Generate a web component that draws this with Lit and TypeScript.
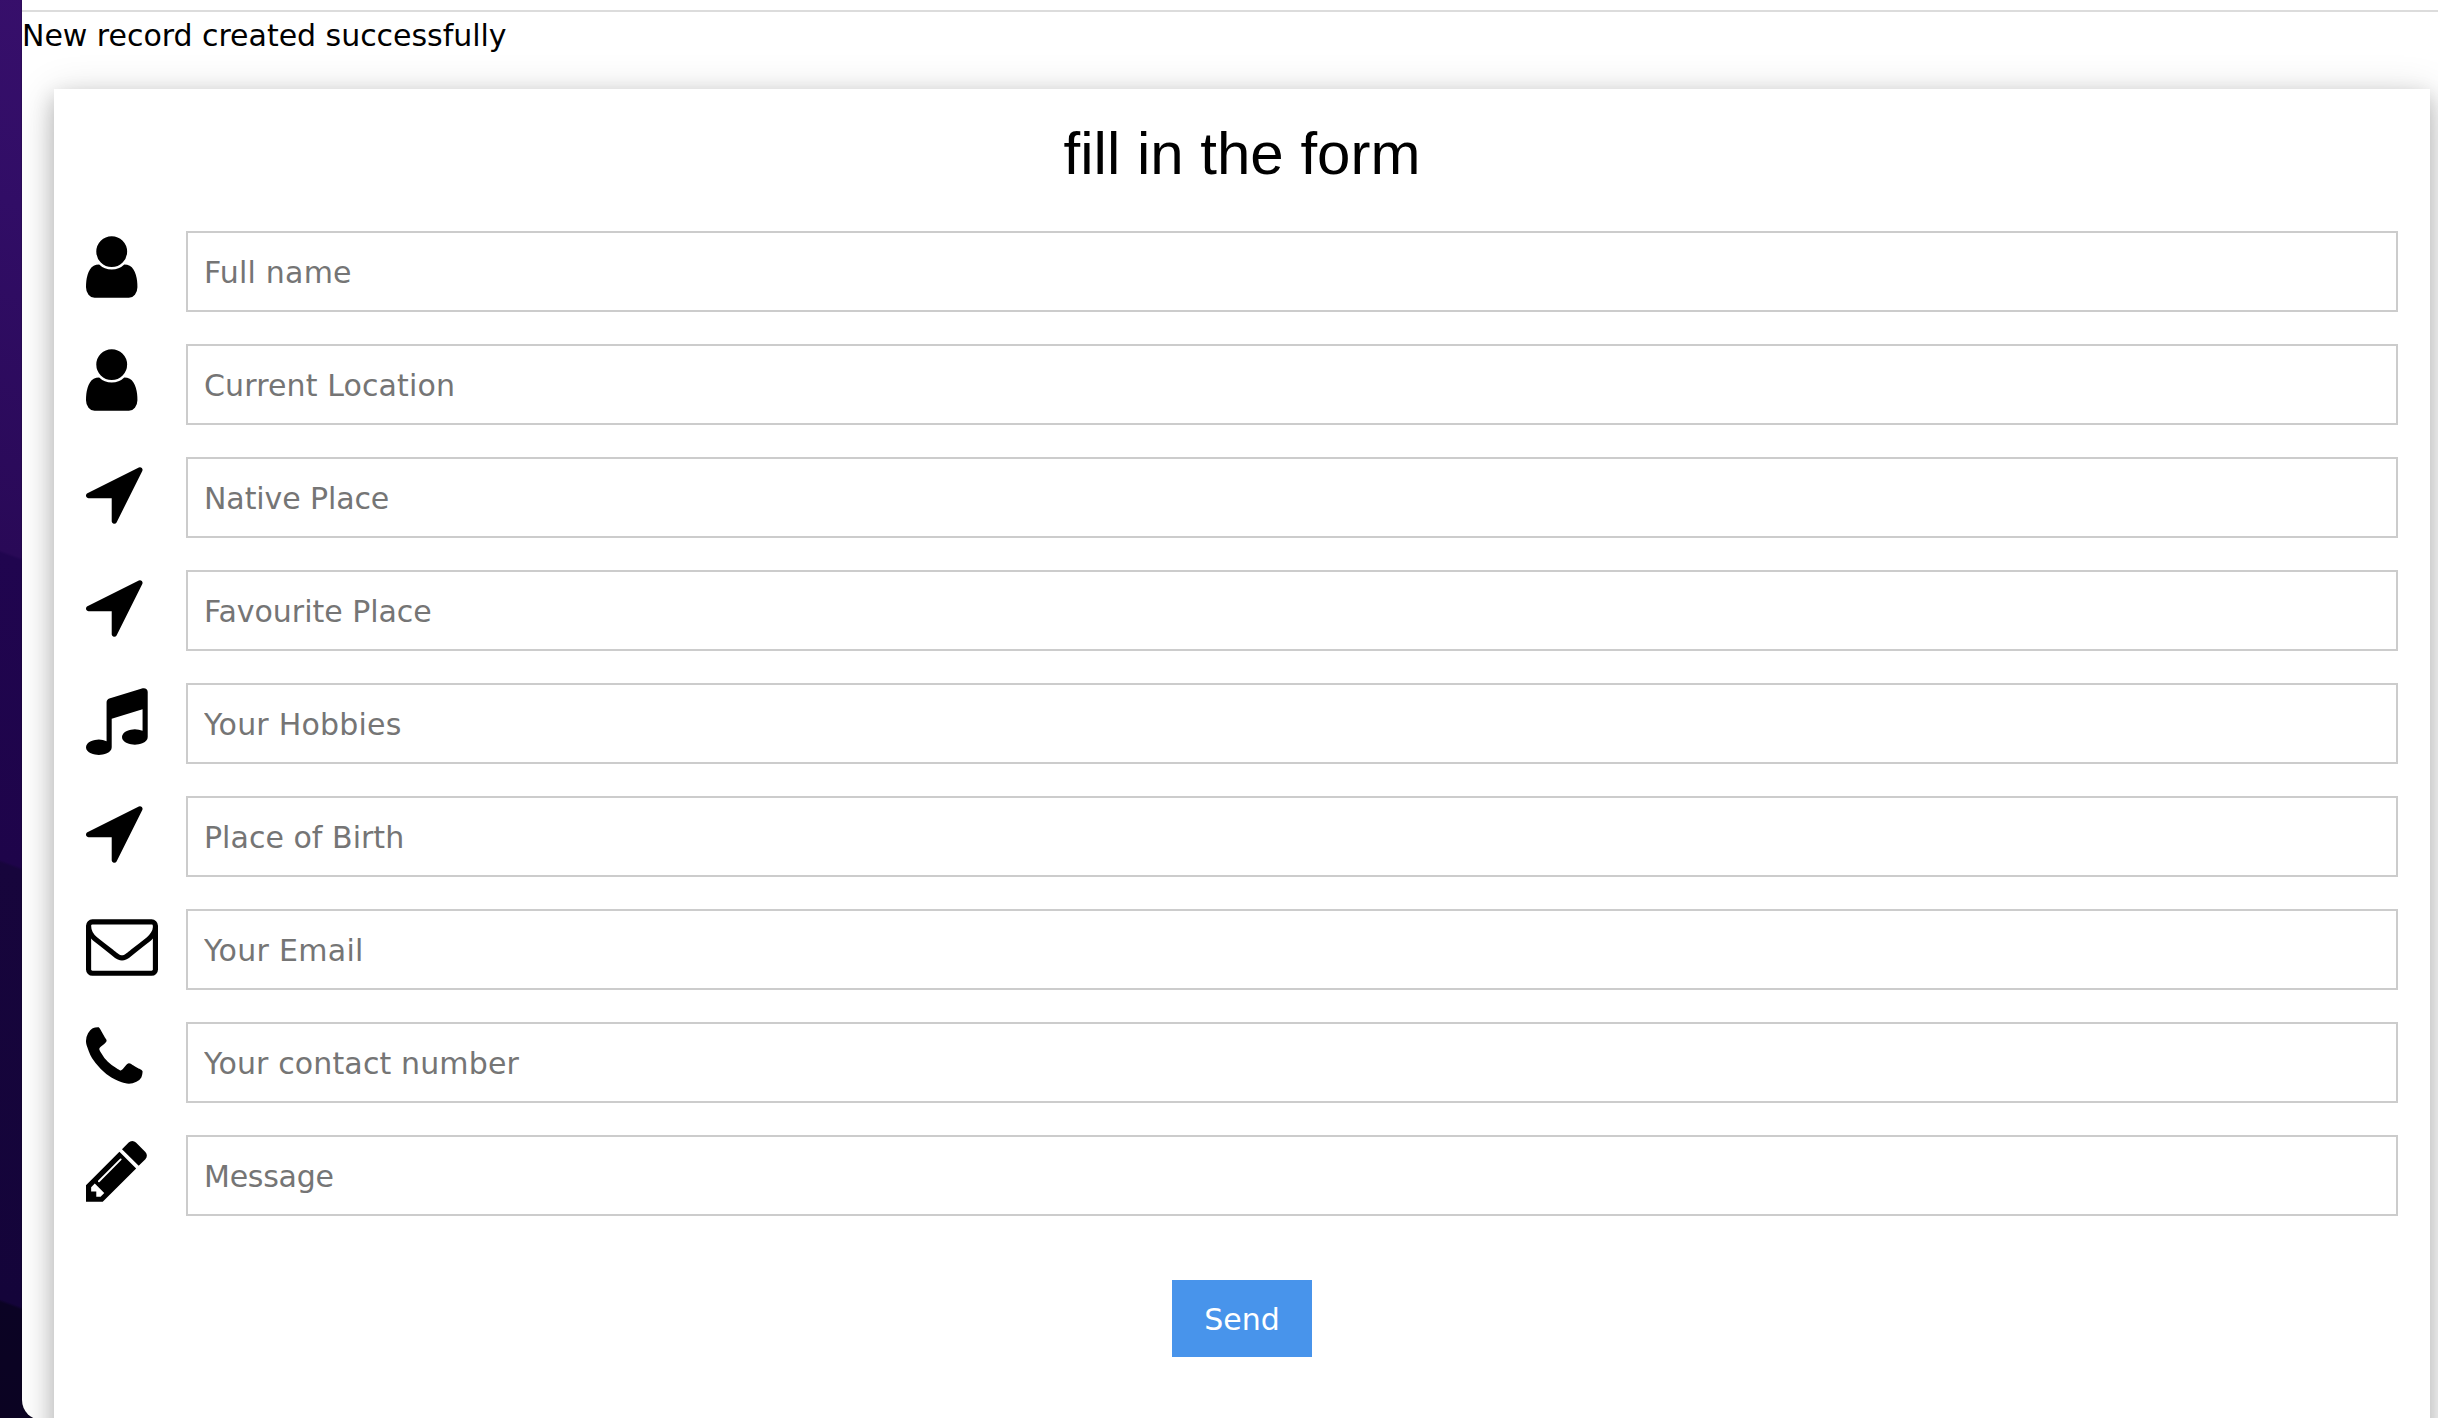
import { LitElement, html, css } from "lit";
import { customElement } from "lit/decorators.js";
import { styleMap } from "lit/directives/style-map.js";

interface Glyph {
  x: number;
  width: number;
  d: string;
}

interface Field {
  icon: string;
  label: string;
  tracking: number;
}

// Glyphs share a 1792-unit em; x and width give the horizontal extent of each one.
const GLYPHS: Record<string, Glyph> = {
  user: {
    x: 256,
    width: 1280,
    d: "M1536 1399q0 109-62.5 187t-150.5 78h-854q-88 0-150.5-78t-62.5-187q0-85 8.5-160.5t31.5-152 58.5-131 94-89 134.5-34.5q131 128 313 128t313-128q76 0 134.5 34.5t94 89 58.5 131 31.5 152 8.5 160.5zm-256-887q0 159-112.5 271.5t-271.5 112.5-271.5-112.5-112.5-271.5 112.5-271.5 271.5-112.5 271.5 112.5 112.5 271.5z",
  },
  arrow: {
    x: 192,
    width: 1408,
    d: "M1593 349l-640 1280q-17 35-57 35-5 0-15-2-22-5-35.5-22.5t-13.5-39.5v-576h-576q-22 0-39.5-13.5t-22.5-35.5 4-42 29-30l1280-640q13-7 29-7 27 0 45 19 15 14 18.5 34.5t-6.5 39.5z",
  },
  music: {
    x: 128,
    width: 1536,
    d: "M1664 224v1120q0 50-34 89t-86 60.5-103.5 32-96.5 10.5-96.5-10.5-103.5-32-86-60.5-34-89 34-89 86-60.5 103.5-32 96.5-10.5q105 0 192 39v-537l-768 237v709q0 50-34 89t-86 60.5-103.5 32-96.5 10.5-96.5-10.5-103.5-32-86-60.5-34-89 34-89 86-60.5 103.5-32 96.5-10.5q105 0 192 39v-967q0-31 19-56.5t49-35.5l832-256q12-4 28-4 40 0 68 28t28 68z",
  },
  envelope: {
    x: 0,
    width: 1792,
    d: "M1664 1504v-768q-32 36-69 66-268 206-426 338-51 43-83 67t-86.5 48.5-102.5 24.5h-2q-48 0-102.5-24.5t-86.5-48.5-83-67q-158-132-426-338-37-30-69-66v768q0 13 9.5 22.5t22.5 9.5h1472q13 0 22.5-9.5t9.5-22.5zm0-1051v-24.5l-.5-13-3-12.5-5.5-9-9-7.5-14-2.5h-1472q-13 0-22.5 9.5t-9.5 22.5q0 168 147 284 193 152 401 317 6 5 35 29.5t46 37.5 44.5 31.5 50.5 27.5 43 9h2q20 0 43-9t50.5-27.5 44.5-31.5 46-37.5 35-29.5q208-165 401-317 54-43 100.5-115.5t46.5-131.5zm128-37v1088q0 66-47 113t-113 47h-1472q-66 0-113-47t-47-113v-1088q0-66 47-113t113-47h1472q66 0 113 47t47 113z",
  },
  phone: {
    x: 192,
    width: 1408,
    d: "M1600 1240q0 27-10 70.5t-21 68.5q-21 50-122 106-94 51-186 51-27 0-52.5-3.5t-57.5-12.5-47.5-14.5-55.5-20.5-49-18q-98-35-175-83-128-79-264.5-215.5t-215.5-264.5q-48-77-83-175-3-9-18-49t-20.5-55.5-14.5-47.5-12.5-57.5-3.5-52.5q0-92 51-186 56-101 106-122 25-11 68.5-21t70.5-10q14 0 21 3 18 6 53 76 11 19 30 54t35 63.5 31 53.5q3 4 17.5 25t21.5 35.5 7 28.5q0 20-28.5 50t-62 55-62 53-28.5 46q0 9 5 22.5t8.5 20.5 14 24 11.5 19q76 137 174 235t235 174q2 1 19 11.5t24 14 20.5 8.5 22.5 5q18 0 46-28.5t53-62 55-62 50-28.5q14 0 28.5 7t35.5 21.5 25 17.5q25 15 53.5 31t63.5 35 54 30q70 35 76 53 3 7 3 21z",
  },
  pencil: {
    x: 128,
    width: 1536,
    d: "M491 1536l91-91-235-235-91 91v107h128v128h107zm523-928q0-22-22-22-10 0-17 7l-542 542q-7 7-7 17 0 22 22 22 10 0 17-7l542-542q7-7 7-17zm-54-192l416 416-832 832h-416v-416zm683 96q0 53-37 90l-166 166-416-416 166-165q36-38 90-38 53 0 91 38l235 234q37 39 37 91z",
  },
};

const FIELDS: Field[] = [
  { icon: "user", label: "Full name", tracking: 0.2 },
  { icon: "user", label: "Current Location", tracking: 0.12 },
  { icon: "arrow", label: "Native Place", tracking: -0.1 },
  { icon: "arrow", label: "Favourite Place", tracking: -0.03 },
  { icon: "music", label: "Your Hobbies", tracking: 0.22 },
  { icon: "arrow", label: "Place of Birth", tracking: 0.03 },
  { icon: "envelope", label: "Your Email", tracking: 0.28 },
  { icon: "phone", label: "Your contact number", tracking: 0.13 },
  { icon: "pencil", label: "Message", tracking: -0.25 },
];

@customElement("app-root")
export class AppRoot extends LitElement {
  static styles = css`
    :host {
      display: block;
      height: 1418px;
      overflow: hidden;
      font-family: Verdana, "DejaVu Sans", sans-serif;
      font-size: 30px;
      line-height: 45px;
      color: #000;
    }
    .screen {
      display: flex;
    }
    .desktop {
      flex: none;
      width: 42px;
      height: 1418px;
      background: linear-gradient(
        200deg,
        #370f6b 0,
        #310d66 200px,
        #290957 531px,
        #20054f 534px,
        #1e044a 822px,
        #17053c 825px,
        #14043a 1235px,
        #0b0324 1238px,
        #0b0322 100%
      );
    }
    .window {
      flex: none;
      box-sizing: border-box;
      width: 2440px;
      height: 1420px;
      margin-left: -20px;
      padding-top: 10px;
      overflow: hidden;
      background: #fff;
      border-bottom-left-radius: 20px;
      box-shadow: 0 0 2px rgba(0, 0, 0, 0.6);
    }
    .rule {
      height: 2px;
      background: #dcdcdc;
    }
    .status {
      box-sizing: border-box;
      height: 45px;
      margin-bottom: 32px;
      padding-top: 1px;
      letter-spacing: -0.03px;
    }
    .card {
      display: flex;
      flex-direction: column;
      box-sizing: border-box;
      width: 2376px;
      height: 1420px;
      margin-left: 32px;
      padding: 20px 32px 0;
      background: #fff;
      box-shadow: 0 8px 20px 0 rgba(0, 0, 0, 0.2), 0 8px 40px 0 rgba(0, 0, 0, 0.19);
    }
    .title {
      height: 90px;
      margin: 0 0 32px;
      font: 400 60px/90px "Liberation Sans", Arial, sans-serif;
      text-align: center;
    }
    .row {
      display: flex;
      height: 81px;
      margin-bottom: 32px;
    }
    .icon {
      flex: 0 0 100px;
    }
    .glyph {
      display: block;
      height: 72px;
      overflow: visible;
    }
    .input {
      flex: 1;
      box-sizing: border-box;
      height: 81px;
      padding: 17px 16px 15px;
      border: 2px solid #ccc;
      border-radius: 0;
      outline: none;
      background: #fff;
      font: inherit;
    }
    .input::placeholder {
      color: #757575;
      opacity: 1;
    }
    .send {
      align-self: center;
      width: 140px;
      height: 77px;
      margin-top: 32px;
      padding: 2px 0 0;
      border: 0;
      background: #4894eb;
      color: #fff;
      font: inherit;
    }
  `;

  private icon(name: string) {
    const g = GLYPHS[name];
    return html`<svg class="glyph" width=${(g.width * 72) / 1792} height="72" viewBox="${g.x} 0 ${g.width} 1792">
      <path d=${g.d}></path>
    </svg>`;
  }

  render() {
    return html`
      <div class="screen">
        <div class="desktop"></div>
        <main class="window">
          <div class="rule"></div>
          <div class="status">New record created successfully</div>
          <form class="card">
            <h2 class="title">fill in the form</h2>
            ${FIELDS.map(
              (f) => html`<div class="row">
                <div class="icon">${this.icon(f.icon)}</div>
                <input
                  class="input"
                  type="text"
                  placeholder=${f.label}
                  style=${styleMap({ letterSpacing: `${f.tracking}px` })}
                />
              </div>`
            )}
            <button class="send" type="button">Send</button>
          </form>
        </main>
      </div>
    `;
  }
}
